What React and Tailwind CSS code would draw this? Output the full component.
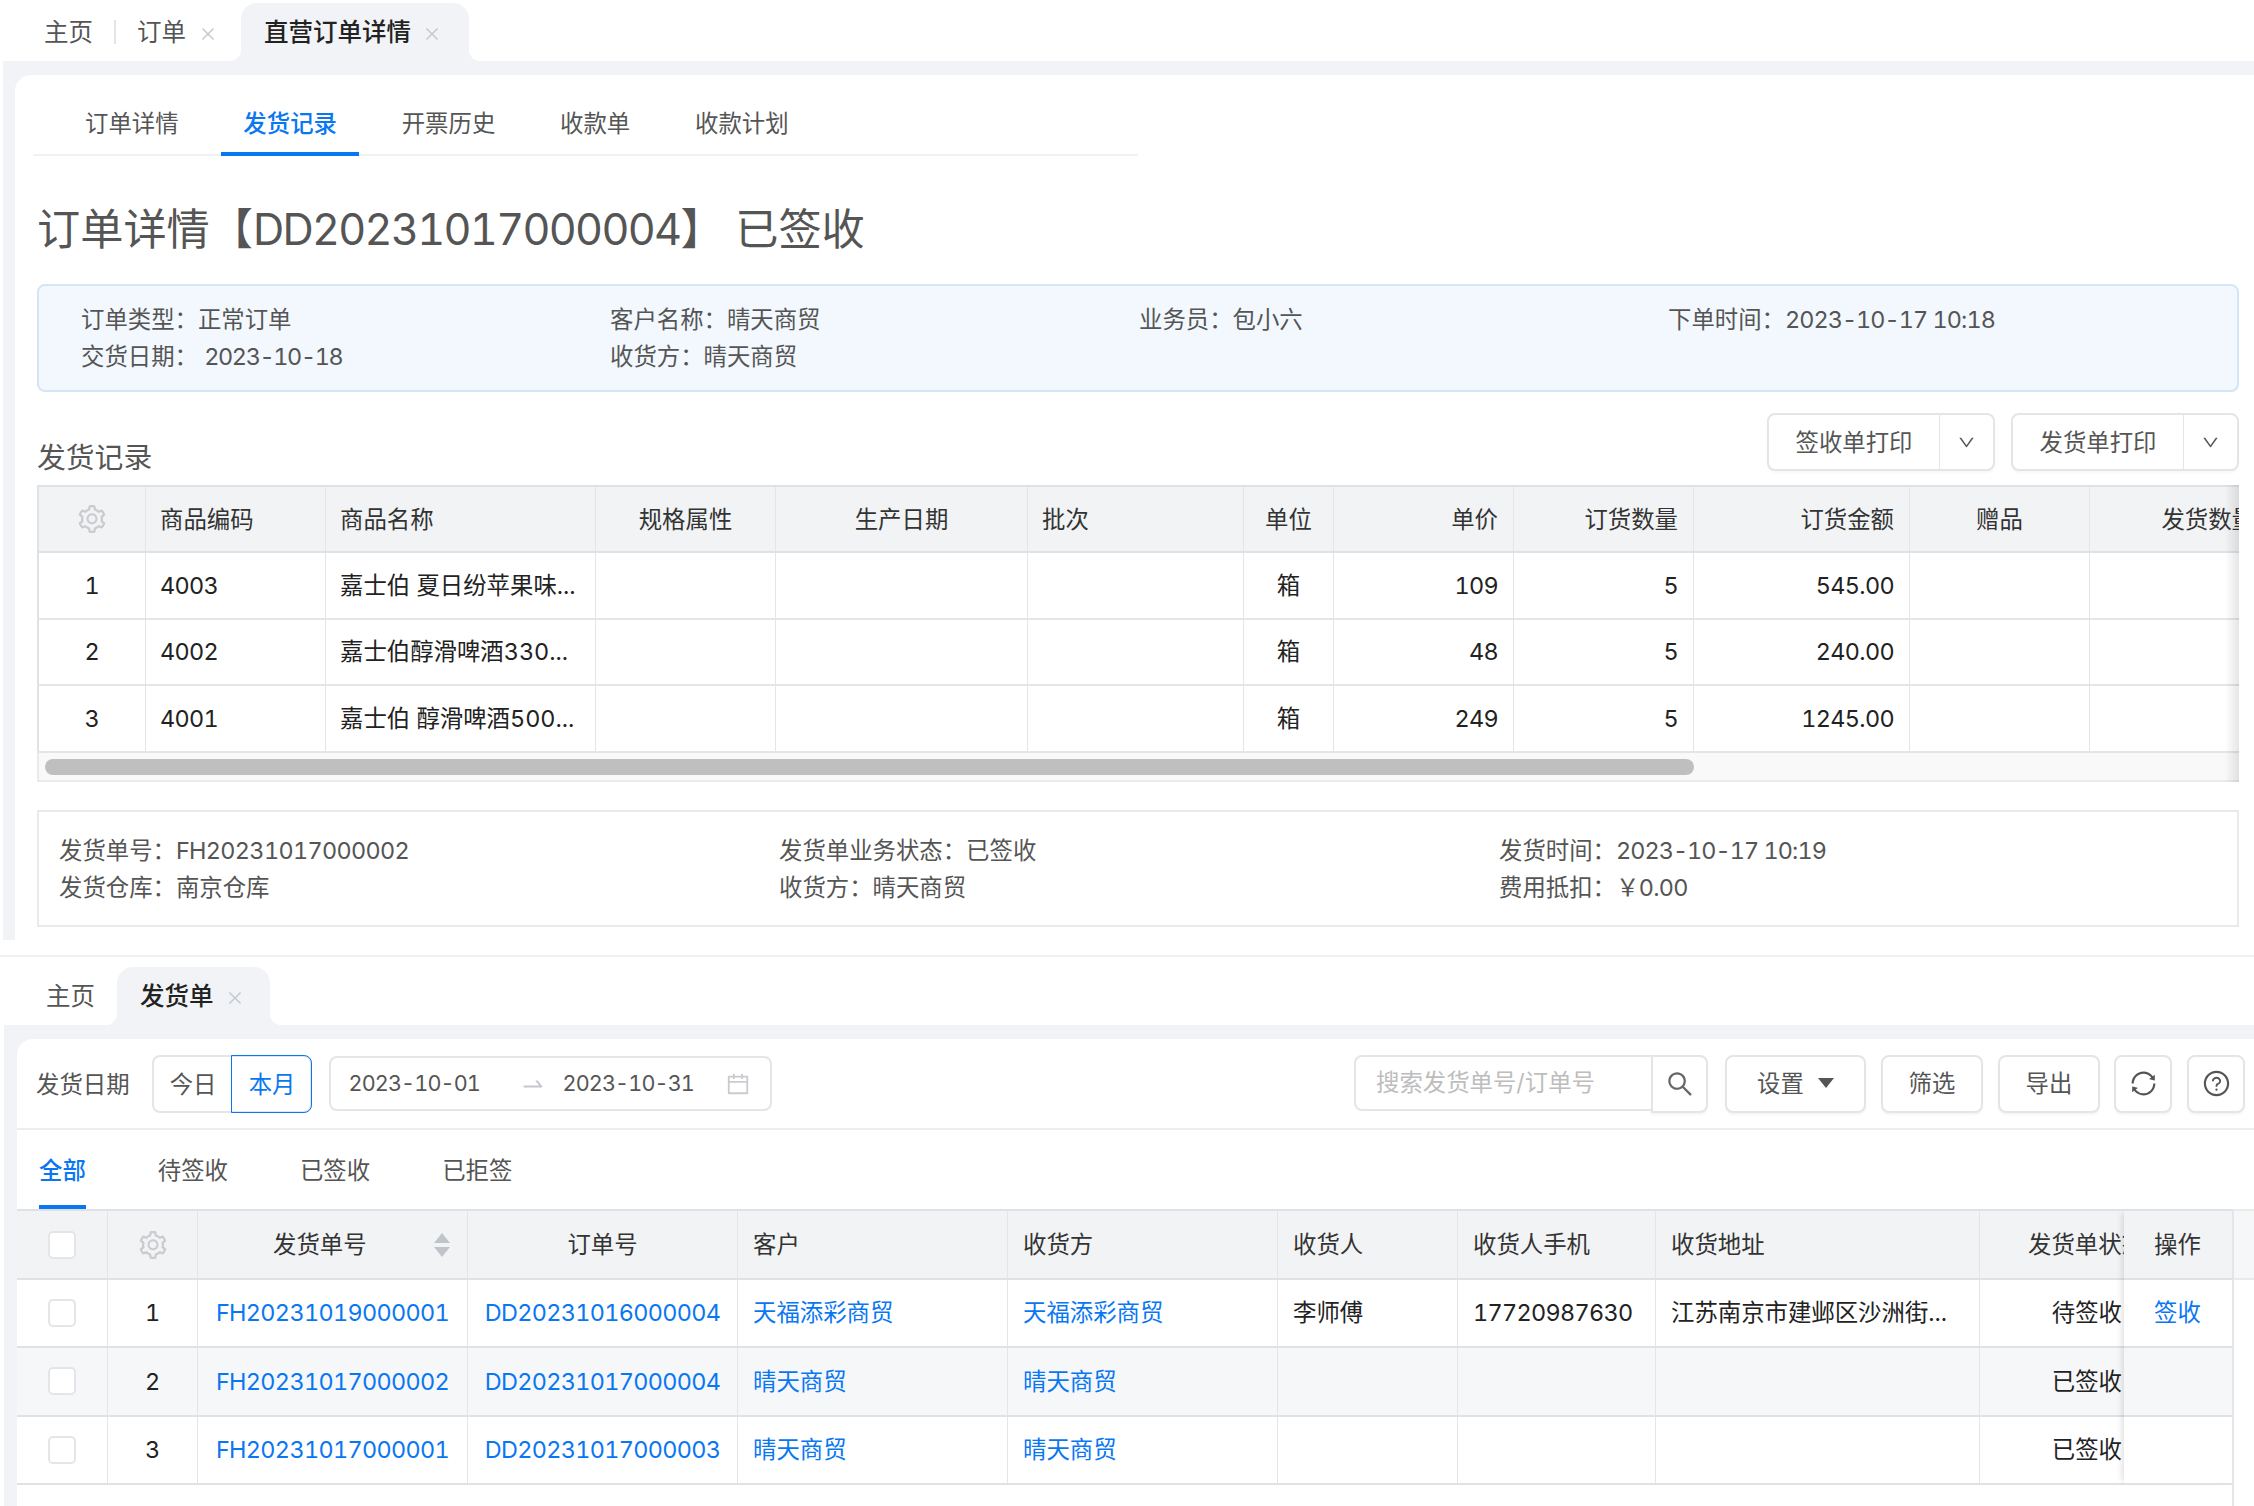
import React from 'react';
import {
  AiOutlineSetting,
  AiOutlineClose,
  AiOutlineDown,
  AiOutlineSearch,
  AiOutlineCalendar,
  AiOutlineSwapRight,
  AiOutlineSync,
  AiOutlineQuestionCircle,
} from 'react-icons/ai';

const orderRows = [
  { no: 1, code: '4003', name: '嘉士伯 夏日纷苹果味...', price: '109', qty: '5', amount: '545.00' },
  { no: 2, code: '4002', name: '嘉士伯醇滑啤酒330...', price: '48', qty: '5', amount: '240.00' },
  { no: 3, code: '4001', name: '嘉士伯 醇滑啤酒500...', price: '249', qty: '5', amount: '1245.00' },
];

const shipRows = [
  { no: 1, ship: 'FH20231019000001', order: 'DD20231016000004', customer: '天福添彩商贸', receiver: '李师傅', phone: '17720987630', address: '江苏南京市建邺区沙洲街...', status: '待签收', action: '签收' },
  { no: 2, ship: 'FH20231017000002', order: 'DD20231017000004', customer: '晴天商贸', status: '已签收' },
  { no: 3, ship: 'FH20231017000001', order: 'DD20231017000003', customer: '晴天商贸', status: '已签收' },
];

const orderCols = 'grid grid-cols-[109px_180px_270px_180px_252px_216px_90px_180px_180px_216px_180px_180px] w-[2233px]';
const shipCols = 'grid grid-cols-[91px_90px_270px_270px_270px_270px_180px_198px_324px_180px] w-[2173px]';

const cellBase = 'flex items-center min-w-0 whitespace-nowrap border-r border-[#e3e5e8]';

// digits run a bit tighter than tabular Inter
const Num = ({ children }) => <span className="tracking-[-0.028em]">{children}</span>;
const DateText = ({ children }) => <span className="whitespace-nowrap tracking-[-0.04em]">{children}</span>;

const PageTab = ({ label, closable }) => (
  <div className="flex items-center text-[#555]">
    <span>{label}</span>
    {closable && <AiOutlineClose size={18} className="ml-[13px] mt-[4px] text-[#c4c8cd]" />}
  </div>
);

const ActiveTab = ({ label, className }) => (
  <div className={`relative flex items-center rounded-t-[16px] bg-[#f1f3f6] font-medium text-[#222] before:absolute before:bottom-0 before:left-[-12px] before:h-3 before:w-3 before:bg-[radial-gradient(circle_at_0_0,transparent_12px,#f1f3f6_12.5px)] after:absolute after:bottom-0 after:right-[-12px] after:h-3 after:w-3 after:bg-[radial-gradient(circle_at_100%_0,transparent_12px,#f1f3f6_12.5px)] ${className}`}>
    <span>{label}</span>
    <AiOutlineClose size={18} className="ml-[12px] mt-[4px] text-[#c4c8cd]" />
  </div>
);

const SplitButton = ({ label }) => (
  <div className="flex h-[58px] w-[228px] items-center rounded-[8px] border-2 border-[#e3e5e8] bg-white text-[#555] shadow-[0_2px_2px_rgba(0,0,0,0.03)]">
    <span className="flex h-full w-[171px] items-center justify-center border-r border-[#e3e5e8] pt-[2px]">{label}</span>
    <span className="flex flex-1 items-center justify-center"><AiOutlineDown size={19} /></span>
  </div>
);

const ToolButton = ({ children, className }) => (
  <button className={`flex h-[58px] items-center justify-center rounded-[8px] border-2 border-[#e3e5e8] bg-white text-[#555] shadow-[0_2px_2px_rgba(0,0,0,0.04)] ${className}`}>
    {children}
  </button>
);

const Triangle = ({ up, className }) => (
  <svg width="16" height="10" viewBox="0 0 16 10" className={className}>
    <polygon points={up ? '8,0 16,10 0,10' : '0,0 16,0 8,10'} fill="currentColor" />
  </svg>
);

const OrderTable = () => (
  <div className="relative h-[297px] w-[2202px] overflow-hidden">
    <div className={`${orderCols} h-[68px] border-y-2 border-[#dfe1e5] bg-[#f2f3f5] text-[#333]`}>
      <div className={`${cellBase} justify-center border-l-2 border-l-[#dfe1e5]`}><AiOutlineSetting size={32} className="text-[#c9cbce]" /></div>
      <div className={`${cellBase} pl-[14px] pt-[2px]`}>商品编码</div>
      <div className={`${cellBase} pl-[14px] pt-[2px]`}>商品名称</div>
      <div className={`${cellBase} justify-center pt-[2px]`}>规格属性</div>
      <div className={`${cellBase} justify-center pt-[2px]`}>生产日期</div>
      <div className={`${cellBase} pl-[14px] pt-[2px]`}>批次</div>
      <div className={`${cellBase} justify-center pt-[2px]`}>单位</div>
      <div className={`${cellBase} justify-end pr-[15px] pt-[2px]`}>单价</div>
      <div className={`${cellBase} justify-end pr-[15px] pt-[2px]`}>订货数量</div>
      <div className={`${cellBase} justify-end pr-[15px] pt-[2px]`}>订货金额</div>
      <div className={`${cellBase} justify-center pt-[2px]`}>赠品</div>
      <div className={`${cellBase} justify-end pr-[14px] pt-[2px]`}>发货数量</div>
    </div>
    {orderRows.map((row) => (
      <div key={row.no} className={`${orderCols} h-[66.5px] border-b-2 border-[#e3e5e8] text-[#222]`}>
        <div className={`${cellBase} justify-center border-l-2 border-l-[#dfe1e5]`}>{row.no}</div>
        <div className={`${cellBase} pl-[14px]`}><Num>{row.code}</Num></div>
        <div className={`${cellBase} pl-[14px]`}>{row.name}</div>
        <div className={cellBase}></div>
        <div className={cellBase}></div>
        <div className={cellBase}></div>
        <div className={`${cellBase} justify-center`}>箱</div>
        <div className={`${cellBase} justify-end pr-[15px]`}><Num>{row.price}</Num></div>
        <div className={`${cellBase} justify-end pr-[15px]`}><Num>{row.qty}</Num></div>
        <div className={`${cellBase} justify-end pr-[15px]`}><Num>{row.amount}</Num></div>
        <div className={cellBase}></div>
        <div className={cellBase}></div>
      </div>
    ))}
    {/* scrollbar */}
    <div className="flex h-[29px] items-center border-l-2 border-b-2 border-[#e8eaec] bg-[#f9f9f9] pl-[6px] pt-[2px]">
      <div className="h-[16px] w-[1649px] rounded-full bg-[#bfbfbf]"></div>
    </div>
    <div className="pointer-events-none absolute right-0 top-0 h-full w-[14px] bg-gradient-to-l from-black/10 to-transparent"></div>
  </div>
);

const ShipTable = () => (
  <div className="flex">
    <div className="w-[2107px] overflow-hidden">
      <div className={`${shipCols} h-[71px] border-y-2 border-[#dfe1e5] bg-[#f2f3f5] text-[#333]`}>
        <div className={`${cellBase} justify-center`}><span className="h-[28px] w-[28px] rounded-[5px] border-2 border-[#e3e5e8] bg-white"></span></div>
        <div className={`${cellBase} justify-center`}><AiOutlineSetting size={32} className="text-[#c9cbce]" /></div>
        <div className={`${cellBase} pl-[75px] pr-[17px]`}>
          <span>发货单号</span>
          <span className="ml-auto flex flex-col gap-[4px] text-[#c0c4c9]">
            <Triangle up />
            <Triangle />
          </span>
        </div>
        <div className={`${cellBase} justify-center`}>订单号</div>
        <div className={`${cellBase} pl-[15px]`}>客户</div>
        <div className={`${cellBase} pl-[15px]`}>收货方</div>
        <div className={`${cellBase} pl-[15px]`}>收货人</div>
        <div className={`${cellBase} pl-[15px]`}>收货人手机</div>
        <div className={`${cellBase} pl-[15px]`}>收货地址</div>
        <div className={`${cellBase} justify-end pr-[14px]`}>发货单状态</div>
      </div>
      {shipRows.map((row) => (
        <div key={row.no} className={`${shipCols} h-[68.3px] border-b-2 border-[#dfe1e5] text-[#222] ${row.no === 2 ? 'bg-[#f6f7f8]' : 'bg-white'}`}>
          <div className={`${cellBase} justify-center`}><span className="h-[28px] w-[28px] rounded-[5px] border-2 border-[#e3e5e8] bg-white"></span></div>
          <div className={`${cellBase} justify-center`}>{row.no}</div>
          <div className={`${cellBase} justify-center text-[#0a77f2]`}><Num>{row.ship}</Num></div>
          <div className={`${cellBase} justify-center text-[#0a77f2]`}><Num>{row.order}</Num></div>
          <div className={`${cellBase} pl-[15px] text-[#0a77f2]`}>{row.customer}</div>
          <div className={`${cellBase} pl-[15px] text-[#0a77f2]`}>{row.customer}</div>
          <div className={`${cellBase} pl-[15px]`}>{row.receiver}</div>
          <div className={`${cellBase} pl-[15px]`}><Num>{row.phone}</Num></div>
          <div className={`${cellBase} pl-[15px]`}>{row.address}</div>
          <div className={`${cellBase} justify-end pr-[37px]`}>{row.status}</div>
        </div>
      ))}
    </div>
    {/* fixed action column */}
    <div className="w-[108px] shadow-[-6px_0_6px_-4px_rgba(0,0,0,0.12)]">
      <div className="flex h-[71px] items-center border-y-2 border-[#dfe1e5] bg-[#f2f3f5] pl-[30px] text-[#333]">操作</div>
      {shipRows.map((row) => (
        <div key={row.no} className={`flex h-[68.3px] items-center border-b-2 border-[#dfe1e5] pl-[30px] text-[#0a77f2] ${row.no === 2 ? 'bg-[#f6f7f8]' : 'bg-white'}`}>
          {row.action}
        </div>
      ))}
    </div>
    <div className="flex-1 border-l-2 border-[#e3e5e8]">
      <div className="h-[71px] border-y-2 border-[#e8eaec] bg-[#f6f7f8]"></div>
    </div>
  </div>
);

const App = () => (
  <div className="h-[1506px] w-[2254px] overflow-hidden bg-white text-[23.4px] leading-none tabular-nums text-[#555] [font-family:Inter,'Noto_Sans_CJK_SC',sans-serif]">
    {/* order detail */}
    <section className="h-[955px] pl-[3px]">
      <div className="flex h-[61px] pl-[41px] pt-[3px] text-[24.5px]">
        <div className="flex items-center pr-[12px]">
          <PageTab label="主页" />
          <span className="mx-[21px] h-[24px] w-[2px] bg-[#e3e5e8]"></span>
          <PageTab label="订单" closable />
        </div>
        <ActiveTab label="直营订单详情" className="w-[228px] pl-[23px] ml-[12px]" />
      </div>
      <div className="h-[879px] bg-[#f1f3f6] pl-[12px] pt-[14px]">
        <div className="h-full rounded-tl-[16px] bg-white pl-[22px] pr-[15px]">
          <div className="ml-[-4px] flex h-[81px] w-[1105px] items-end gap-[20.8px] border-b-2 border-[#f0f1f3] pl-[30px]">
            {['订单详情', '发货记录', '开票历史', '收款单', '收款计划'].map((tab, i) => (
              <div key={tab} className={`-mb-[2px] flex h-[50px] items-start border-b-[4px] px-[22px] pt-[6px] ${i === 1 ? 'border-[#0a77f2] font-medium text-[#0a77f2]' : 'border-transparent text-[#555]'}`}>
                {tab}
              </div>
            ))}
          </div>
          <h1 className="flex h-[128px] items-center whitespace-pre pt-[19px] text-[43.2px] text-[#555]">
            <span>订单详情【</span>
            <span className="tracking-[-0.039em]">DD20231017000004</span>
            <span>】 已签收</span>
          </h1>
          <div className="grid h-[108px] grid-cols-[529px_529px_529px_529px] content-start gap-y-[11px] rounded-[8px] border-2 border-[#d3e5f6] bg-[#f2f8fe] pl-[42px] pt-[21px]">
            <div className="flex h-[26px] items-center">订单类型：正常订单</div>
            <div className="flex h-[26px] items-center">客户名称：晴天商贸</div>
            <div className="flex h-[26px] items-center">业务员：包小六</div>
            <div className="flex h-[26px] items-center">下单时间：<DateText>2023-10-17 10:18</DateText></div>
            <div className="flex h-[26px] items-center">交货日期：&nbsp;<span className="tracking-[-0.058em]">2023-10-18</span></div>
            <div className="flex h-[26px] items-center">收货方：晴天商贸</div>
          </div>
          <div className="mt-[20px] flex h-[73px] items-start justify-between">
            <h2 className="mt-[26px] text-[28.8px] leading-[40px] text-[#555]">发货记录</h2>
            <div className="mt-[1px] flex gap-[16px]">
              <SplitButton label="签收单打印" />
              <SplitButton label="发货单打印" />
            </div>
          </div>
          <OrderTable />
          <div className="mt-[28px] grid h-[117px] grid-cols-[720px_720px_720px] content-start gap-y-[11px] border-2 border-[#e8eaec] pl-[20px] pt-[26px] text-[#555]">
            <div className="flex h-[26px] items-center">发货单号：<Num>FH20231017000002</Num></div>
            <div className="flex h-[26px] items-center">发货单业务状态：已签收</div>
            <div className="flex h-[26px] items-center">发货时间：<DateText>2023-10-17 10:19</DateText></div>
            <div className="flex h-[26px] items-center">发货仓库：南京仓库</div>
            <div className="flex h-[26px] items-center">收货方：晴天商贸</div>
            <div className="flex h-[26px] items-center">费用抵扣：<Num>￥0.00</Num></div>
          </div>
        </div>
      </div>
    </section>

    {/* shipping orders */}
    <section className="h-[551px] border-t-2 border-[#f0f1f3] pl-[4px]">
      <div className="flex h-[68px] pl-[42px] pt-[10px] text-[24.5px]">
        <div className="flex w-[71px] items-center"><PageTab label="主页" /></div>
        <ActiveTab label="发货单" className="w-[153px] pl-[23px]" />
      </div>
      <div className="h-[481px] bg-[#f1f3f6] pl-[13px] pt-[14px]">
        <div className="h-full rounded-tl-[16px] bg-white">
          <div className="flex h-[91px] items-center border-b-2 border-[#eceef0] pl-[19px] pr-[9px]">
            <span className="pt-[2px] text-[#555]">发货日期</span>
            <div className="ml-[22px] flex h-[58px] w-[160px] rounded-[8px] border-2 border-[#e3e5e8]">
              <span className="flex w-[79px] items-center justify-center pt-[2px] text-[#555]">今日</span>
              <span className="-m-[2px] flex flex-1 items-center justify-center rounded-r-[8px] border-[1.5px] border-[#0a77f2] pl-[2px] pt-[2px] text-[#0a77f2]">本月</span>
            </div>
            <div className="ml-[17px] flex h-[55px] w-[443px] items-center rounded-[8px] border-2 border-[#e3e5e8] pl-[18px] pt-[1px] text-[21.6px] text-[#555]">
              <span className="w-[129px]"><DateText>2023-10-01</DateText></span>
              <AiOutlineSwapRight size={26} className="ml-[42px] text-[#c4c8cd]" />
              <span className="ml-[17px] w-[129px]"><DateText>2023-10-31</DateText></span>
              <AiOutlineCalendar size={26} className="ml-[33px] text-[#c9cbce]" />
            </div>
            <div className="ml-auto flex items-center">
              <div className="flex h-[58px] items-start">
                <div className="flex h-[56px] w-[297px] items-center rounded-l-[8px] border-2 border-r-0 border-[#e3e5e8] pl-[20px] text-[#bdbdbd]">搜索发货单号/订单号</div>
                <ToolButton className="w-[57px] rounded-l-none"><AiOutlineSearch size={30} className="text-[#666]" /></ToolButton>
              </div>
              <ToolButton className="ml-[17px] w-[141px]">
                <span>设置</span>
                <Triangle className="ml-[14px] mt-[-2px] text-[#555]" />
              </ToolButton>
              <ToolButton className="ml-[15px] w-[102px]">筛选</ToolButton>
              <ToolButton className="ml-[15px] w-[102px]">导出</ToolButton>
              <ToolButton className="ml-[14px] w-[58px]"><AiOutlineSync size={29} /></ToolButton>
              <ToolButton className="ml-[15px] w-[58px]"><AiOutlineQuestionCircle size={29} /></ToolButton>
            </div>
          </div>
          <div className="flex h-[79px] gap-[72px] pl-[22px] pt-[29px]">
            {['全部', '待签收', '已签收', '已拒签'].map((tab, i) => (
              <div key={tab} className={`h-[50px] border-b-[4px] ${i === 0 ? 'border-[#0a77f2] font-medium text-[#0a77f2]' : 'border-transparent text-[#555]'}`}>
                {tab}
              </div>
            ))}
          </div>
          <ShipTable />
          <div className="ml-[2215px] h-[30px] border-l-2 border-[#e3e5e8]"></div>
        </div>
      </div>
    </section>
  </div>
);

export default App;
